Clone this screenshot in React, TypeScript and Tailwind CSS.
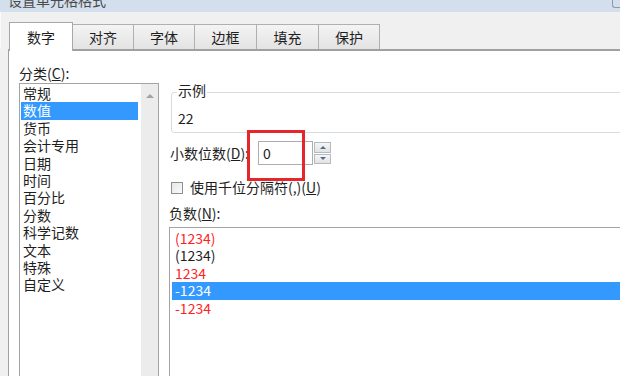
import React from "react";

const categories = ["常规", "数值", "货币", "会计专用", "日期", "时间", "百分比", "分数", "科学记数", "文本", "特殊", "自定义"];

const negatives = [
  { text: "(1234)", red: true },
  { text: "(1234)", red: false },
  { text: "1234", red: true },
  { text: "-1234", red: false, selected: true },
  { text: "-1234", red: true },
];

const tabs = [
  { label: "对齐", w: "w-[61px]" },
  { label: "字体", w: "w-[61px]" },
  { label: "边框", w: "w-[62px]" },
  { label: "填充", w: "w-[62px]" },
  { label: "保护", w: "w-[61px]" },
];

export default function App() {
  return (
    <div
      className="relative w-[620px] h-[376px] overflow-hidden bg-[#f0f0f0] text-[14px] text-[#1e1e1e] flex flex-col"
      style={{ fontFamily: '"Noto Sans CJK SC", "Noto Sans", sans-serif' }}
    >
      {/* 标题栏 */}
      <div className="h-[12px] shrink-0 bg-[#d3dfec] flex justify-between overflow-hidden">
        <span className="pl-[8px] -mt-[7px] leading-[14px] text-[#4a4a4a]">设置单元格格式</span>
        <div className="w-[8px] h-[8px] border-l border-b border-[#8c9aae] rounded-bl-[3px]" />
      </div>

      {/* 选项卡 */}
      <div className="h-[37px] shrink-0 flex items-end pl-[8px] border-l border-[#fafafa]">
        <div className="relative z-10 -mb-[2px] w-[64px] h-[29px] bg-white border border-b-0 border-[#a8a8a8] flex justify-center pt-[6px] leading-[17px]">
          数字
        </div>
        {tabs.map((t) => (
          <div
            key={t.label}
            className={`${t.w} h-[25px] border-t border-r border-[#b0b0b0] bg-gradient-to-b from-[#f4f4f4] to-[#e3e3e3] flex justify-center pt-[4px] leading-[17px]`}
          >
            {t.label}
          </div>
        ))}
      </div>

      {/* 内容 */}
      <div className="flex-1 ml-[8px] border-l border-t-2 border-[#a0a0a0] bg-white flex pt-[12px] pl-[10px]">
        {/* 分类 */}
        <div className="w-[140px] shrink-0 flex flex-col">
          <div className="h-[20px] leading-[20px]">
            分类(<span className="underline">C</span>):
          </div>
          <div className="h-[300px] border border-[#a3a3a3] flex">
            <div className="flex-1 pt-[1px]">
              {categories.map((c) => (
                <div
                  key={c}
                  className={`h-[17.4px] leading-[17.4px] ml-[1px] mr-[3px] pl-[2px] ${c === "数值" ? "bg-[#3399ff] text-white" : ""}`}
                >
                  {c}
                </div>
              ))}
            </div>
            <div className="w-[17px] bg-[#ececec] flex justify-center">
              <div className="mt-[10px] w-0 h-0 border-l-[4px] border-r-[4px] border-b-[4px] border-l-transparent border-r-transparent border-b-[#a3a3a3]" />
            </div>
          </div>
        </div>

        {/* 右侧 */}
        <div className="ml-[10px] w-[470px] shrink-0 flex flex-col">
          <div className="relative mt-[29px] ml-[2px] h-[41px] border border-[#d5dde3] rounded-[3px] pl-[6px] pt-[17px] leading-[17px]">
            <span className="absolute -top-[11px] left-[5px] bg-white px-[1px] leading-[17px]">示例</span>
            22
          </div>

          <div className="mt-[8px] h-[24px] flex items-center">
            <span className="ml-[1px] w-[88px] leading-[17px]">
              小数位数(<span className="underline">D</span>):
            </span>
            <div className="w-[55px] h-[24px] border border-[#abadb3] pl-[4px] leading-[22px]">0</div>
            <div className="ml-[1px] w-[17px] h-[22px] flex flex-col gap-[1px]">
              <div className="flex-1 border border-[#b5bac0] bg-gradient-to-b from-[#f6f6f6] to-[#e2e2e2] flex items-center justify-center">
                <div className="w-0 h-0 border-l-[3px] border-r-[3px] border-b-[3px] border-l-transparent border-r-transparent border-b-[#4e6a8c]" />
              </div>
              <div className="flex-1 border border-[#b5bac0] bg-gradient-to-b from-[#f6f6f6] to-[#e2e2e2] flex items-center justify-center">
                <div className="w-0 h-0 border-l-[3px] border-r-[3px] border-t-[3px] border-l-transparent border-r-transparent border-t-[#4e6a8c]" />
              </div>
            </div>
          </div>

          <div className="mt-[14px] h-[17px] flex items-center">
            <div className="ml-[2px] w-[12px] h-[12px] border border-[#8e8f8f] bg-gradient-to-br from-[#e6e6e6] to-[#fafafa]" />
            <span className="ml-[7px] leading-[17px]">
              使用千位分隔符(,)(<span className="underline">U</span>)
            </span>
          </div>

          <div className="mt-[9px] leading-[17px]">
            负数(<span className="underline">N</span>):
          </div>
          <div className="mt-[5px] h-[200px] border border-[#a3a3a3] pt-[2px]">
            {negatives.map((n, i) => (
              <div
                key={i}
                className={`h-[17.4px] leading-[17.4px] ml-[2px] pl-[3px] ${
                  n.selected ? "bg-[#3399ff] text-white" : n.red ? "text-[#ff1f1f]" : ""
                }`}
              >
                {n.text}
              </div>
            ))}
          </div>
        </div>
      </div>

      {/* 红框标注 */}
      <div className="absolute left-[247px] top-[130px] w-[58px] h-[51px] border-[3px] border-[#e5262b]" />
    </div>
  );
}
